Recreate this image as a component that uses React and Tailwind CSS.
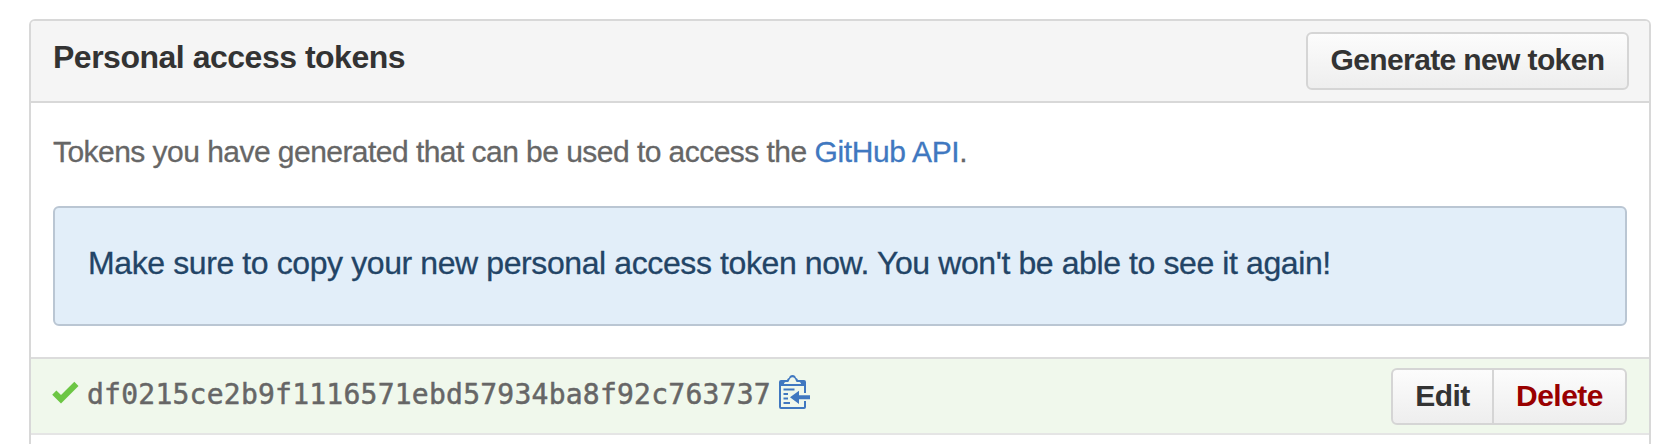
function CheckIcon() {
  return (
    <svg className="h-[24px] w-[28px] shrink-0" viewBox="0 0 28 24" fill="#6cc644">
      <path d="M22.3 0.8 L26.5 5 L9 22.5 L0.2 13.7 L4.4 9.5 L9 14.1 Z" />
    </svg>
  );
}

function ClipboardIcon() {
  return (
    <svg className="h-[34px] w-[32px] shrink-0" viewBox="0 0 32 34" fill="#4078c0">
      <path
        fillRule="evenodd"
        d="M2 5 H8 C8.6 3.8 9.2 3 10 3 C10.4 1.2 11.6 0 13.5 0 C15.4 0 16.6 1.2 17 3 C17.8 3 18.4 3.8 19 5 H25 Q27 5 27 7 V18 H25 V11 H2 V32 H25 V26 H27 V32 Q27 34 25 34 H2 Q0 34 0 32 V7 Q0 5 2 5 Z M5 9 H22 C22 7.6 21 7 19.5 7 H18 C16.5 7 16.8 2.3 13.5 2.3 C10.2 2.3 10.5 7 9 7 H7.5 C6 7 5 7.6 5 9 Z"
      />
      <path d="M4.5 13.5 H15.5 V15.5 H4.5 Z M4.5 18 H9 V20 H4.5 Z M4.5 22.5 H9 V24.5 H4.5 Z M4.5 27 H11 V29 H4.5 Z" />
      <path d="M11 22.3 L20 15.8 V20.3 H31 V24.3 H20 V29 Z" />
    </svg>
  );
}

export default function App() {
  return (
    <div className="h-[444px] overflow-hidden bg-white pt-[19px] pr-[11px] pl-[29px] font-['Liberation_Sans',Arial,sans-serif]">
      <section className="h-[500px] rounded-t-[6px] border-2 border-[#d8d8d8]">
        <header className="flex h-[82px] items-start justify-between rounded-t-[4px] border-b-2 border-[#d8d8d8] bg-[#f5f5f5] pr-5 pl-[22px]">
          <h1 className="pt-[18px] text-[32px] leading-[36px] font-bold tracking-[-0.49px] whitespace-nowrap text-[#333]">
            Personal access tokens
          </h1>
          <button className="mt-[11px] h-[58px] w-[323px] rounded-[6px] border-2 border-[#d5d5d5] bg-linear-to-b from-[#fcfcfc] to-[#eeeeee] pb-[2px] text-[30px] leading-[34px] font-bold tracking-[-0.62px] whitespace-nowrap text-[#333]">
            Generate new token
          </button>
        </header>

        <div className="h-[254px] px-[22px] pt-[32px]">
          <p className="h-[71px] text-[30px] leading-[34px] tracking-[-0.54px] whitespace-nowrap text-[#666] [-webkit-text-stroke:0.3px]">
            Tokens you have generated that can be used to access the{" "}
            <a className="tracking-[-0.35px] text-[#4078c0]">GitHub API</a>.
          </p>
          <div className="flex h-[120px] items-start rounded-[6px] border-2 border-[#bac6d3] bg-[#e2eef9] pt-[37px] pl-[33px] text-[32px] leading-[36px] tracking-[-0.4px] whitespace-nowrap text-[#246] [-webkit-text-stroke:0.3px]">
            Make sure to copy your new personal access token now. You won't be able to see it again!
          </div>
        </div>

        <div className="flex h-[78px] items-start border-y-2 border-t-[#dcdcdc] border-b-[#e5e5e5] bg-[#f0f8ec] pr-[22px] pl-[21px]">
          <div className="flex items-start">
            <div className="pt-[22px]">
              <CheckIcon />
            </div>
            <code className="ml-[7px] pt-[19px] font-['DejaVu_Sans_Mono',monospace] text-[28px] leading-[34px] tracking-[0.24px] text-[#666] [-webkit-text-stroke:0.5px]">
              df0215ce2b9f1116571ebd57934ba8f92c763737
            </code>
            <div className="ml-[8px] pt-[16px]">
              <ClipboardIcon />
            </div>
          </div>
          <div className="mt-[9px] ml-auto flex h-[57px] w-[236px] rounded-[6px] border-2 border-[#d5d5d5] bg-linear-to-b from-[#fcfcfc] to-[#eeeeee] text-[30px] leading-[34px] font-bold tracking-[-0.5px]">
            <button className="w-[101px] border-r-2 border-[#d5d5d5] pb-[2px] text-[#333]">Edit</button>
            <button className="flex-1 pb-[2px] text-[#900]">Delete</button>
          </div>
        </div>
      </section>
    </div>
  );
}
